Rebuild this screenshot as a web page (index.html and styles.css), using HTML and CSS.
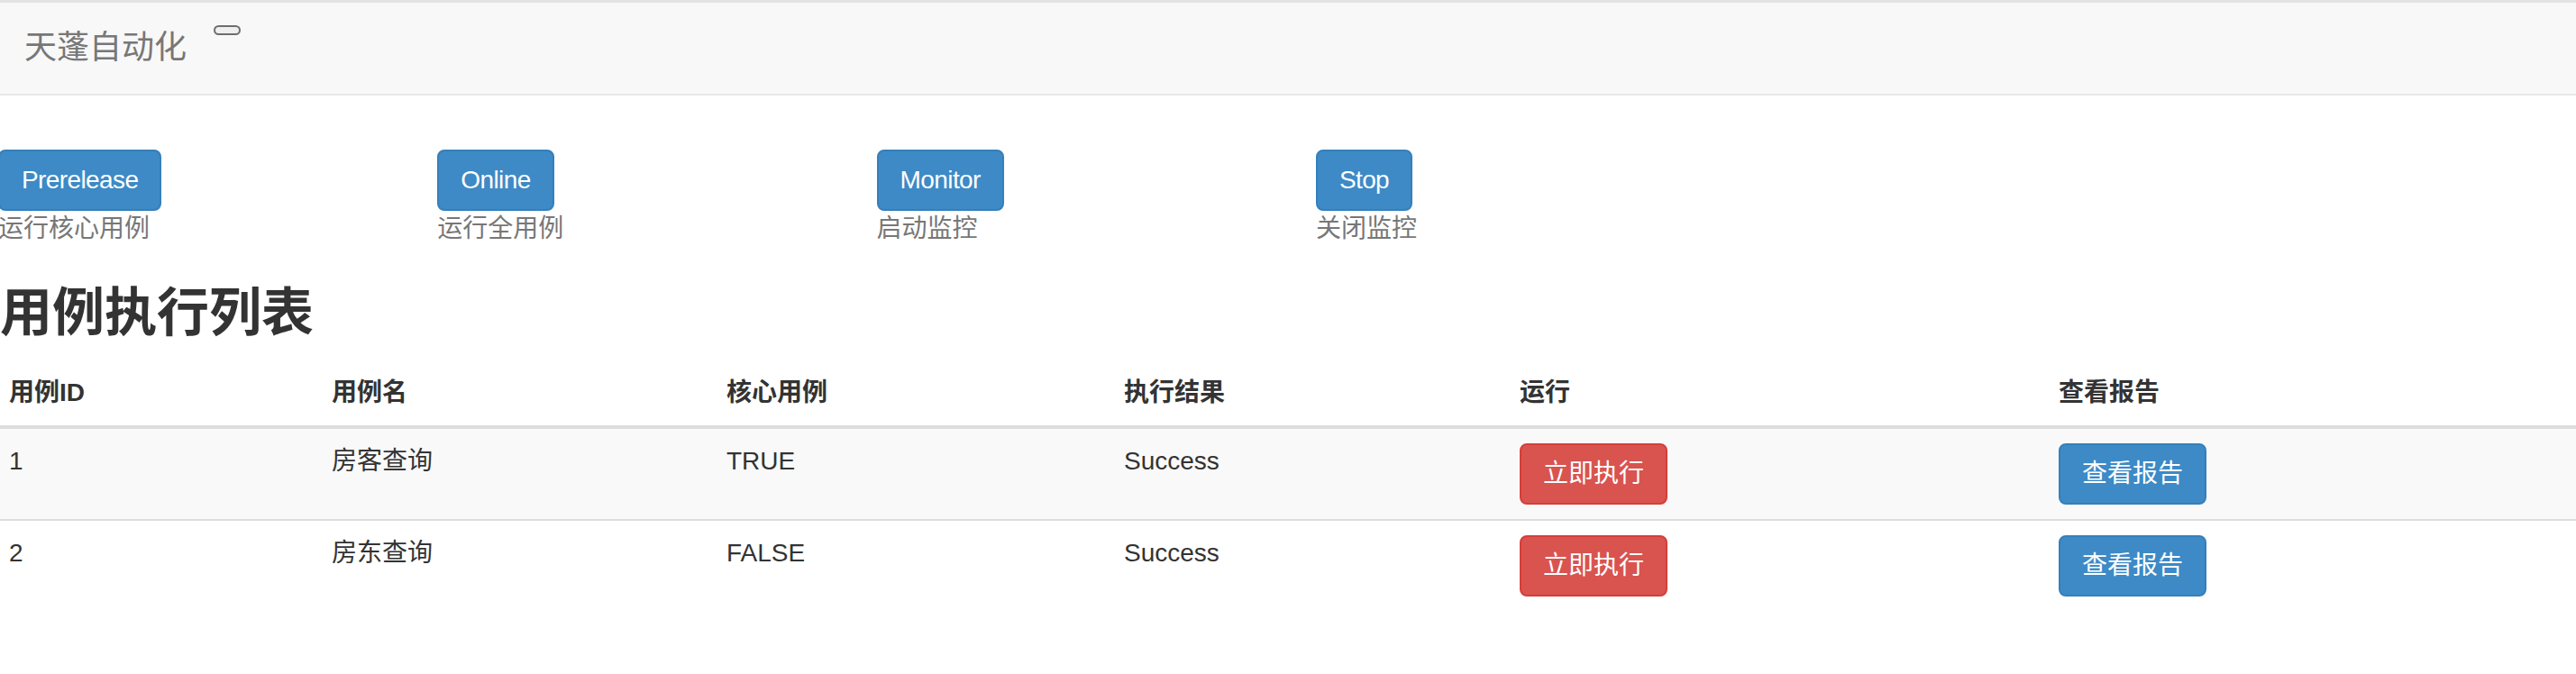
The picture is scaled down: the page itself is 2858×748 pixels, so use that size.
FILE: index.html
```html
<!DOCTYPE html>
<html lang="zh-CN">
<head>
<meta charset="utf-8">
<title>天蓬自动化</title>
<link rel="stylesheet" href="styles.css">
</head>
<body>
<nav class="navbar">
  <a class="brand">天蓬自动化</a>
  <span class="toggle"></span>
</nav>
<main class="main">
  <section class="actions">
    <div class="action">
      <button class="btn btn-primary btn-latin">Prerelease</button>
      <span class="caption">运行核心用例</span>
    </div>
    <div class="action">
      <button class="btn btn-primary btn-latin">Online</button>
      <span class="caption">运行全用例</span>
    </div>
    <div class="action">
      <button class="btn btn-primary btn-latin">Monitor</button>
      <span class="caption">启动监控</span>
    </div>
    <div class="action">
      <button class="btn btn-primary btn-latin">Stop</button>
      <span class="caption">关闭监控</span>
    </div>
  </section>
  <h2 class="title">用例执行列表</h2>
  <table class="cases">
    <colgroup>
      <col class="c1"><col class="c2"><col class="c3"><col class="c4"><col class="c5"><col class="c6">
    </colgroup>
    <thead>
      <tr><th>用例ID</th><th>用例名</th><th>核心用例</th><th>执行结果</th><th>运行</th><th>查看报告</th></tr>
    </thead>
    <tbody>
      <tr class="odd">
        <td>1</td><td>房客查询</td><td>TRUE</td><td>Success</td>
        <td><button class="btn btn-danger">立即执行</button></td>
        <td><button class="btn btn-primary">查看报告</button></td>
      </tr>
      <tr>
        <td>2</td><td>房东查询</td><td>FALSE</td><td>Success</td>
        <td><button class="btn btn-danger">立即执行</button></td>
        <td><button class="btn btn-primary">查看报告</button></td>
      </tr>
    </tbody>
  </table>
</main>
</body>
</html>
```
FILE: styles.css
```css
html, body {
  margin: 0;
  padding: 0;
  background: #fff;
  overflow: hidden;
}
body {
  font-family: "Liberation Sans", "Noto Sans CJK SC", sans-serif;
  font-size: 28px;
  line-height: 40px;
  color: #333;
}
.navbar {
  display: flex;
  align-items: flex-start;
  height: 101px;
  background: #f8f8f8;
  border-top: 3px solid #e2e2e2;
  border-bottom: 2px solid #e7e7e7;
  box-sizing: content-box;
}
.brand {
  padding: 30px 30px 0 27px;
  font-size: 36px;
  line-height: 40px;
  color: #777;
}
.toggle {
  margin-top: 25px;
  width: 26px;
  height: 7px;
  border: 2px solid #6e6e6e;
  border-radius: 6px;
  background: #efefef;
}
.main {
  padding-top: 60px;
}
.actions {
  display: grid;
  grid-template-columns: repeat(4, 487.3px);
  margin-left: -2px;
}
.action {
  display: flex;
  flex-direction: column;
  align-items: flex-start;
}
.caption {
  color: #777;
}
.btn {
  font-family: "Liberation Sans", "Noto Sans CJK SC", sans-serif;
  font-size: 28px;
  line-height: 40px;
  padding: 12px 24px;
  border: 2px solid transparent;
  border-radius: 8px;
  color: #fff;
  cursor: pointer;
  display: inline-block;
  margin: 0;
}
.btn-latin {
  letter-spacing: -0.6px;
}
.btn-primary {
  background: #3d8ac6;
  border-color: #357fbb;
}
.btn-danger {
  background: #d9534f;
  border-color: #d43f3a;
}
.title {
  margin: 40px 0 20px 0;
  font-size: 58px;
  line-height: 66px;
  font-weight: 700;
  color: #333;
}
.cases {
  width: 2864px;
  margin-left: -6px;
  table-layout: fixed;
  border-collapse: separate;
  border-spacing: 0;
}
.c1 { width: 358px; }
.c2 { width: 438px; }
.c3 { width: 441px; }
.c4 { width: 439px; }
.c5 { width: 598px; }
.c6 { width: 590px; }
.cases th,
.cases td {
  text-align: left;
  vertical-align: top;
  padding: 16px;
}
.cases th {
  font-weight: 700;
  border-bottom: 4px solid #ddd;
}
.cases tbody tr + tr td {
  border-top: 2px solid #ddd;
}
.cases tr.odd td {
  background: #f9f9f9;
}
```
